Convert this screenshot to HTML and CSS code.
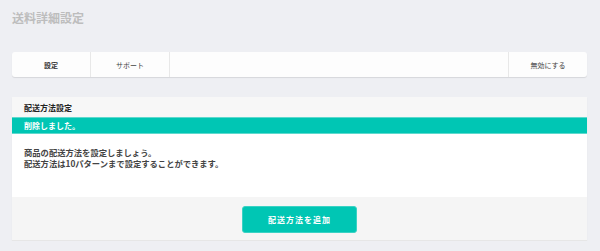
FILE: index.html
```html
<!DOCTYPE html>
<html lang="ja">
<head>
    <meta charset="UTF-8">
    <meta name="viewport" content="width=device-width, initial-scale=1.0">
    <title>送料詳細設定</title>
    <link rel="stylesheet" href="styles.css">
</head>
<body>
    <div class="page">
        <h1>送料詳細設定</h1>
        <div class="tabs">
            <div class="tab active">設定</div>
            <div class="tab">サポート</div>
            <div class="tab-spacer"></div>
            <div class="tab">無効にする</div>
        </div>
        <div class="panel">
            <div class="panel-header">配送方法設定</div>
            <div class="notice">削除しました。</div>
            <div class="panel-body">
                <p>商品の配送方法を設定しましょう。</p>
                <p>配送方法は10パターンまで設定することができます。</p>
            </div>
            <div class="panel-footer">
                <button class="add-button">配送方法を追加</button>
            </div>
        </div>
    </div>
</body>
</html>
```

FILE: styles.css
```css
* {
    box-sizing: border-box;
    margin: 0;
    padding: 0;
}

body {
    font-family: "Noto Sans CJK JP", "Noto Sans", sans-serif;
    color: #333;
    background-color: #eeeff3;
}

.page {
    padding: 10px 13px 0 12px;
}

h1 {
    font-size: 12px;
    font-weight: bold;
    color: #bdbdbd;
    line-height: 16px;
    height: 42px;
}

.tabs {
    display: flex;
    height: 25px;
    background-color: #fdfdfd;
    border-radius: 3px;
    box-shadow: 0 1px 1px rgba(0, 0, 0, 0.1);
    margin-bottom: 20px;
}

.tab {
    width: 79px;
    display: flex;
    align-items: center;
    justify-content: center;
    font-size: 7px;
    color: #444;
    border-right: 1px solid #e8e8e8;
}

.tab.active {
    font-weight: bold;
    color: #333;
}

.tab:last-child {
    border-right: none;
    border-left: 1px solid #e8e8e8;
}

.tab-spacer {
    flex: 1;
}

.panel {
    background-color: #fff;
    box-shadow: 0 1px 1px rgba(0, 0, 0, 0.06);
    border-bottom: 1px solid #e6e6e6;
}

.panel-header {
    height: 20px;
    padding-left: 12px;
    display: flex;
    align-items: center;
    font-size: 8px;
    font-weight: bold;
    color: #222;
    background-color: #f7f7f7;
}

.notice {
    height: 17px;
    padding-left: 12px;
    display: flex;
    align-items: center;
    font-size: 8px;
    font-weight: bold;
    color: #fff;
    background-color: #00c6b4;
    border-top: 1px solid #5fd9cd;
    border-bottom: 1px solid #5fd9cd;
}

.panel-body {
    height: 63px;
    padding: 13px 12px 0;
    font-size: 8.3px;
    font-weight: bold;
    color: #444;
    line-height: 11px;
}

.panel-footer {
    height: 43px;
    display: flex;
    justify-content: center;
    align-items: center;
    background-color: #f5f5f5;
}

.add-button {
    width: 115px;
    height: 27px;
    font-family: inherit;
    font-size: 8px;
    font-weight: bold;
    letter-spacing: 1px;
    color: #fff;
    background-color: #00c6b4;
    border: 1px solid #3ad2c4;
    border-radius: 3px;
    margin-top: 1px;
}
```
